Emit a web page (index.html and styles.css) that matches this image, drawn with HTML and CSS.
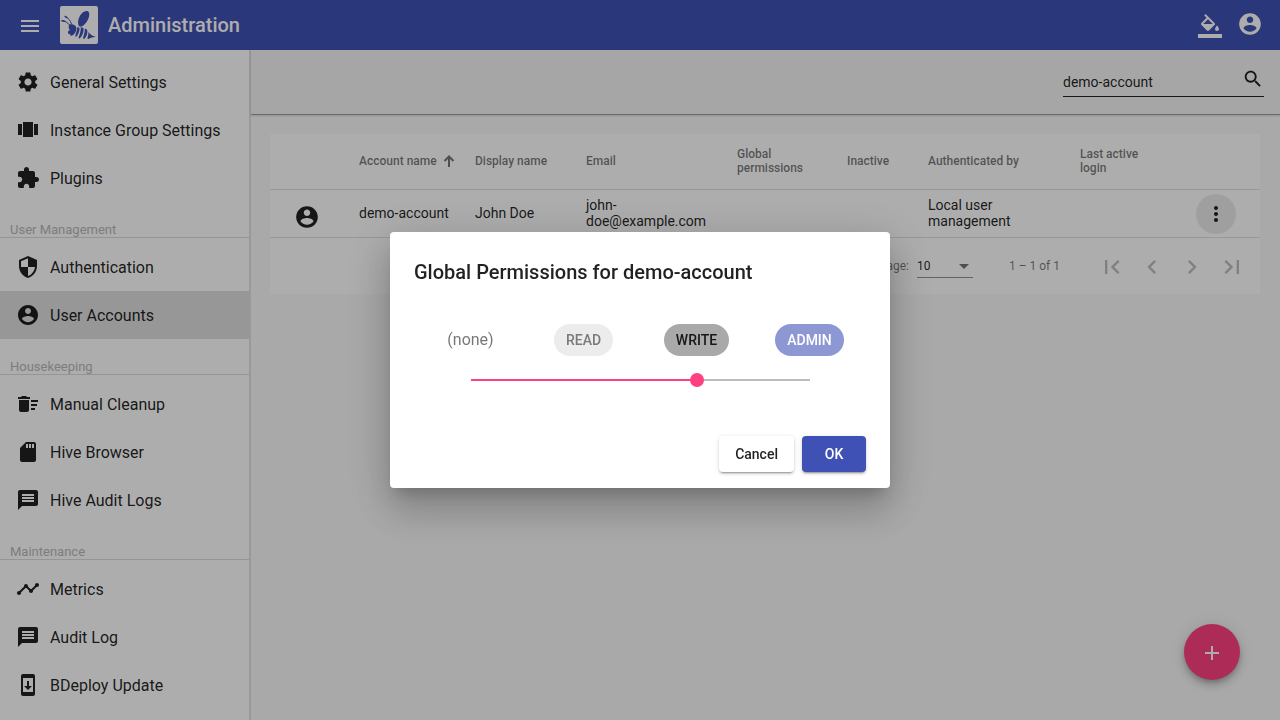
FILE: index.html
```html
<!DOCTYPE html>
<html lang="en">
<head>
<meta charset="utf-8">
<title>Administration</title>
<meta name="viewport" content="width=device-width, initial-scale=1">
<link rel="stylesheet" href="styles.css">
</head>
<body>
<svg class="sprite" aria-hidden="true">
  <symbol id="account" viewBox="0 0 24 24"><path d="M12 2C6.48 2 2 6.48 2 12s4.480 10 10 10 10-4.480 10-10S17.520 2 12 2zm0 3c1.660 0 3 1.340 3 3s-1.340 3-3 3-3-1.340-3-3 1.340-3 3-3zm0 14.200c-2.500 0-4.710-1.280-6-3.220.03-1.990 4-3.080 6-3.080 1.990 0 5.970 1.090 6 3.080-1.290 1.940-3.500 3.220-6 3.220z"/></symbol>
  <symbol id="message" viewBox="0 0 24 24"><path d="M20 2H4c-1.100 0-1.990.9-1.990 2L2 22l4-4h14c1.100 0 2-.9 2-2V4c0-1.100-.9-2-2-2zm-2 12H6v-2h12v2zm0-3H6V9h12v2zm0-3H6V6h12v2z"/></symbol>
</svg>

<div class="app">
  <header class="topbar">
    <button class="icon-btn menu-btn" aria-label="Menu"><svg class="icon" viewBox="0 0 24 24"><path d="M3 18h18v-2H3v2zm0-5h18v-2H3v2zm0-7v2h18V6H3z"/></svg></button>
    <svg class="logo" viewBox="0 0 38 38" role="img" aria-label="BDeploy">
      <rect width="38" height="38" rx="2" fill="#fff"/>
      <g fill="#3f51b5">
        <path d="M19.500 20.500C17 18 18 11.500 21.500 7.700c2.500-2.700 6.300-3.700 7.400-1.300 1.100 2.400-.4 7-2.700 10.200-1.900 2.600-4.800 4.900-6.700 3.900z"/>
        <path d="M9.500 18.600c2.500-1.200 6.200 0 6.800 3 .6 3.400-1.600 7.300-4.700 8.200-1.100.3-1.600-.6-1.200-1.500-1.800.4-2.900-1.200-2.300-2.800.4-1 1.400-1.300 2.200-1.200-1.600-.8-2.200-4.300-.8-5.700z"/>
        <path d="M17.300 21.300c1.700-.3 2.400.6 2.200 2.200-.4 3-1.500 5.300-3 6.900-.7.700-1.500.1-1.200-.8.800-2.600 1.900-5.200 2-8.300z"/>
        <path d="M20.800 21.300c2-.2 3 .9 2.800 2.700-.3 3.200-1.600 6.200-3.500 8.100-.8.700-1.800.1-1.400-1 1-2.800 2.300-5.900 2.100-9.800z"/>
        <path d="M24.800 22.500c1.800.3 2.700 1.500 2.600 3.200-.2 2.700-1.200 5.100-2.800 6.900-.8.700-1.700.2-1.500-.8.600-2.800 1.900-5.500 1.700-9.300z"/>
        <path d="M28.500 25.800c1.300 2.400 3.300 4 7.200 5-2.600.6-4.900.8-6.900 1.900-.9.500-1.600 0-1.300-.9.600-2 1.200-3.900 1-6z"/>
      </g>
      <path d="M9.500 19C7.500 16.200 5 15 2 14.700M11.500 18C10.500 14.500 8.500 12 5.200 10.500" fill="none" stroke="#3f51b5" stroke-width="1" stroke-linecap="round"/>
      <path d="M4.500 15.200 2 14.700M7 11.700 5.200 10.500" fill="none" stroke="#3f51b5" stroke-width="1.500" stroke-linecap="round"/>
    </svg>
    <h1 class="topbar-title">Administration</h1>
    <button class="icon-btn" aria-label="Theme"><svg class="icon" viewBox="0 0 24 24"><path d="M16.560 8.940L7.620 0 6.210 1.410l2.380 2.380-5.150 5.150c-.59.59-.59 1.540 0 2.120l5.500 5.500c.29.29.68.44 1.060.44s.77-.15 1.060-.44l5.500-5.500c.59-.58.59-1.530 0-2.120zM5.210 10L10 5.210 14.790 10H5.210zM19 11.500s-2 2.170-2 3.500c0 1.100.9 2 2 2s2-.9 2-2c0-1.330-2-3.500-2-3.500z"/><path d="M0 20h24v4H0z"/></svg></button>
    <button class="icon-btn user-btn" aria-label="User"><svg class="icon icon-26"><use href="#account"/></svg></button>
  </header>

  <nav class="sidebar" aria-label="Administration">
    <a class="nav-item" href="#"><svg class="icon" viewBox="0 0 24 24"><path d="M19.140 12.940c.04-.3.060-.61.060-.94 0-.32-.02-.64-.07-.94l2.030-1.580c.18-.14.230-.41.120-.61l-1.920-3.320c-.12-.22-.37-.29-.59-.22l-2.390.96c-.5-.38-1.030-.7-1.620-.94l-.36-2.540c-.04-.24-.24-.41-.48-.41h-3.840c-.24 0-.43.170-.47.410l-.36 2.540c-.59.240-1.130.570-1.620.940l-2.390-.96c-.22-.08-.47 0-.59.220L2.740 8.870c-.12.210-.08.470.12.610l2.030 1.580c-.05.3-.09.630-.09.940s.02.640.070.940l-2.030 1.580c-.18.140-.23.410-.12.610l1.920 3.320c.12.220.37.290.59.220l2.390-.96c.5.380 1.030.7 1.620.94l.36 2.540c.05.240.24.410.48.410h3.840c.24 0 .44-.17.470-.41l.36-2.540c.59-.24 1.130-.56 1.620-.94l2.390.96c.22.080.47 0 .59-.22l1.920-3.320c.12-.22.070-.47-.12-.61l-2.010-1.580zM12 15.600c-1.980 0-3.600-1.620-3.600-3.600s1.620-3.600 3.600-3.600 3.600 1.620 3.600 3.600-1.620 3.600-3.600 3.600z"/></svg>General Settings</a>
    <a class="nav-item" href="#"><svg class="icon" viewBox="0 0 24 24"><path d="M7 19h10V4H7v15zm-5-2h4V6H2v11zM18 6v11h4V6h-4z"/></svg>Instance Group Settings</a>
    <a class="nav-item" href="#"><svg class="icon" viewBox="0 0 24 24"><path d="M20.500 11H19V7c0-1.100-.9-2-2-2h-4V3.500C13 2.120 11.880 1 10.500 1S8 2.120 8 3.500V5H4c-1.100 0-1.990.9-1.990 2v3.800H3.500c1.490 0 2.700 1.210 2.700 2.700s-1.210 2.700-2.700 2.700H2V20c0 1.100.9 2 2 2h3.800v-1.500c0-1.490 1.210-2.700 2.700-2.700 1.490 0 2.700 1.210 2.700 2.700V22H17c1.100 0 2-.9 2-2v-4h1.500c1.380 0 2.500-1.120 2.500-2.500S21.880 11 20.500 11z"/></svg>Plugins</a>
    <h2 class="nav-heading">User Management</h2>
    <a class="nav-item" href="#"><svg class="icon" viewBox="0 0 24 24"><path d="M12 1L3 5v6c0 5.550 3.840 10.740 9 12 5.160-1.260 9-6.450 9-12V5l-9-4zm0 10.990h7c-.53 4.120-3.280 7.790-7 8.940V12H5V6.300l7-3.110v8.800z"/></svg>Authentication</a>
    <a class="nav-item selected" href="#" aria-current="page"><svg class="icon"><use href="#account"/></svg>User Accounts</a>
    <h2 class="nav-heading">Housekeeping</h2>
    <a class="nav-item" href="#"><svg class="icon" viewBox="0 0 24 24"><path d="M15 16h4v2h-4zm0-8h7v2h-7zm0 4h6v2h-6zM3 18c0 1.100.9 2 2 2h6c1.100 0 2-.9 2-2V8H3v10zM14 5h-3l-1-1H6L5 5H2v2h12z"/></svg>Manual Cleanup</a>
    <a class="nav-item" href="#"><svg class="icon" viewBox="0 0 24 24"><path d="M18 2h-8L4.020 8 4 20c0 1.100.9 2 2 2h12c1.100 0 2-.9 2-2V4c0-1.100-.9-2-2-2zm-6 6h-2V4h2v4zm3 0h-2V4h2v4zm3 0h-2V4h2v4z"/></svg>Hive Browser</a>
    <a class="nav-item" href="#"><svg class="icon"><use href="#message"/></svg>Hive Audit Logs</a>
    <h2 class="nav-heading">Maintenance</h2>
    <a class="nav-item" href="#"><svg class="icon" viewBox="0 0 24 24"><path d="M23 8c0 1.100-.9 2-2 2-.18 0-.35-.02-.51-.07l-3.560 3.550c.05.160.070.340.070.520 0 1.100-.9 2-2 2s-2-.9-2-2c0-.18.020-.36.070-.52l-2.550-2.550c-.16.050-.34.070-.52.070s-.36-.02-.52-.07l-4.550 4.560c.05.160.070.330.070.510 0 1.100-.9 2-2 2s-2-.9-2-2 .9-2 2-2c.18 0 .35.020.51.070l4.560-4.550C8.020 9.360 8 9.180 8 9c0-1.100.9-2 2-2s2 .9 2 2c0 .18-.02.36-.07.52l2.550 2.550c.16-.05.34-.07.52-.07s.36.020.52.070l3.550-3.560C19.020 8.350 19 8.180 19 8c0-1.100.9-2 2-2s2 .9 2 2z"/></svg>Metrics</a>
    <a class="nav-item" href="#"><svg class="icon"><use href="#message"/></svg>Audit Log</a>
    <a class="nav-item" href="#"><svg class="icon" viewBox="0 0 24 24"><path d="M17 1.010L7 1c-1.100 0-2 .9-2 2v18c0 1.100.9 2 2 2h10c1.100 0 2-.9 2-2V3c0-1.100-.9-1.990-2-1.990zM17 19H7V5h10v14zm-1-6h-3V8h-2v5H8l4 4 4-4z"/></svg>BDeploy Update</a>
  </nav>

  <main class="main">
    <div class="toolbar">
      <label class="search"><input type="text" value="demo-account" aria-label="Search"><svg class="icon icon-22" viewBox="0 0 24 24"><path d="M15.500 14h-.79l-.28-.27C15.410 12.590 16 11.110 16 9.500 16 5.910 13.090 3 9.500 3S3 5.910 3 9.500 5.910 16 9.500 16c1.610 0 3.090-.59 4.230-1.570l.27.280v.79l5 4.990L20.490 19l-4.990-5zm-6 0C7.010 14 5 11.990 5 9.500S7.010 5 9.500 5 14 7.010 14 9.500 11.990 14 9.500 14z"/></svg></label>
    </div>
    <section class="card">
      <table class="accounts">
        <colgroup><col class="c-icon"><col class="c-name"><col class="c-display"><col class="c-email"><col class="c-perm"><col class="c-inactive"><col class="c-auth"><col class="c-login"><col class="c-menu"></colgroup>
        <thead>
          <tr><th></th><th><span class="sorted">Account name <svg class="arrow" viewBox="0 0 12 12"><path d="M6 12V1.500M1.500 6 6 1.500 10.500 6" fill="none" stroke="currentColor" stroke-width="2"/></svg></span></th><th>Display name</th><th>Email</th><th>Global permissions</th><th>Inactive</th><th>Authenticated by</th><th>Last active login</th><th></th></tr>
        </thead>
        <tbody>
          <tr><td><svg class="icon icon-26 row-icon"><use href="#account"/></svg></td><td class="account-name">demo-account</td><td>John Doe</td><td>john-doe@example.com</td><td></td><td></td><td>Local user management</td><td></td><td><button class="icon-btn more-btn" aria-label="Account actions"><svg class="icon" viewBox="0 0 24 24"><path d="M12 8c1.100 0 2-.9 2-2s-.9-2-2-2-2 .9-2 2 .9 2 2 2zm0 2c-1.100 0-2 .9-2 2s.9 2 2 2 2-.9 2-2-.9-2-2-2zm0 6c-1.100 0-2 .9-2 2s.9 2 2 2 2-.9 2-2-.9-2-2-2z"/></svg></button></td></tr>
        </tbody>
      </table>
      <footer class="paginator">
        <label for="page-size">Items per page:</label>
        <span class="select-wrap"><select id="page-size"><option>10</option><option>25</option><option>50</option></select></span>
        <span class="range">1 – 1 of 1</span>
        <div class="pager">
          <button class="icon-btn" disabled aria-label="First page"><svg class="icon icon-28" viewBox="0 0 24 24"><path d="M18.410 16.590L13.820 12l4.590-4.590L17 6l-6 6 6 6zM6 6h2v12H6z"/></svg></button>
          <button class="icon-btn" disabled aria-label="Previous page"><svg class="icon icon-28" viewBox="0 0 24 24"><path d="M15.410 7.410L14 6l-6 6 6 6 1.410-1.410L10.830 12z"/></svg></button>
          <button class="icon-btn" disabled aria-label="Next page"><svg class="icon icon-28" viewBox="0 0 24 24"><path d="M10 6L8.590 7.410 13.170 12l-4.580 4.590L10 18l6-6z"/></svg></button>
          <button class="icon-btn" disabled aria-label="Last page"><svg class="icon icon-28" viewBox="0 0 24 24"><path d="M5.590 7.410L10.180 12l-4.590 4.590L7 18l6-6-6-6zM16 6h2v12h-2z"/></svg></button>
        </div>
      </footer>
    </section>
  </main>
</div>

<button class="fab" aria-label="Add account"><svg class="icon" viewBox="0 0 24 24"><path d="M19 13h-6v6h-2v-6H5v-2h6V5h2v6h6v2z"/></svg></button>

<div class="backdrop">
  <form class="dialog" role="dialog" aria-modal="true" aria-labelledby="dialog-title">
    <h2 class="dialog-title" id="dialog-title">Global Permissions for demo-account</h2>
    <div class="levels">
      <span class="none">(none)</span>
      <span class="chip chip-read">READ</span>
      <span class="chip chip-write">WRITE</span>
      <span class="chip chip-admin">ADMIN</span>
    </div>
    <div class="slider-row"><input class="slider" type="range" min="0" max="3" value="2" aria-label="Permission level"></div>
    <div class="actions">
      <button class="btn" type="button">Cancel</button>
      <button class="btn btn-primary" type="button">OK</button>
    </div>
  </form>
</div>
</body>
</html>
```
FILE: styles.css
```css
* { box-sizing: border-box; }

body {
  margin: 0;
  font-family: Roboto, "Liberation Sans", sans-serif;
  font-size: 14px;
  color: rgba(0, 0, 0, .87);
  background: #fafafa;
}

button, input, select { font: inherit; color: inherit; }
h1, h2 { margin: 0; font-weight: 500; }
.sprite { display: none; }

.icon { display: block; flex: none; width: 24px; height: 24px; fill: currentColor; }
.icon-22 { width: 22px; height: 22px; }
.icon-26 { width: 26px; height: 26px; }
.icon-28 { width: 28px; height: 28px; }

.icon-btn {
  display: flex;
  align-items: center;
  justify-content: center;
  width: 40px;
  height: 40px;
  padding: 0;
  border: 0;
  border-radius: 50%;
  background: none;
}

.app {
  display: grid;
  grid-template: 50px 1fr / 250px 1fr;
  min-height: 100vh;
}

.topbar {
  grid-column: 1 / -1;
  display: flex;
  align-items: center;
  padding: 0 10px;
  color: #fff;
  background: #3f51b5;
}
.menu-btn { margin-top: 2px; }
.topbar .icon-btn { padding-top: 2px; }
.topbar .menu-btn, .topbar .user-btn { padding-top: 0; }
.user-btn { margin-bottom: 2px; }
.logo { width: 38px; height: 38px; margin: 0 10px; }
.topbar-title { flex: 1; font-size: 20px; line-height: 32px; }

.sidebar {
  padding: 8px 0;
  background: #fff;
  border-right: 1px solid #e0e0e0;
}
.nav-item {
  display: flex;
  align-items: center;
  gap: 10px;
  height: 48px;
  padding: 0 16px;
  font-size: 16px;
  color: inherit;
  text-decoration: none;
}
.nav-item.selected { background: #dfdfdf; }
.nav-heading {
  margin-bottom: 5px;
  padding: 20px 10px 0;
  border-bottom: 1px solid #dcdcdc;
  font-size: 13px;
  line-height: 15px;
  font-weight: 400;
  color: #b9b9b9;
}

.main { min-width: 0; border-left: 1px solid #e2e2e2; }
.toolbar {
  display: flex;
  justify-content: flex-end;
  align-items: flex-start;
  height: 65px;
  padding: 17px 16px 0;
  background: #f5f5f5;
  border-bottom: 1px solid #9c9c9c;
  box-shadow: 0 1px 2px rgba(0, 0, 0, .15);
}
.search {
  display: flex;
  align-items: flex-end;
  width: 201px;
  height: 30px;
  padding-bottom: 6px;
  border-bottom: 1px solid #212121;
}
.search input {
  flex: 1;
  min-width: 0;
  height: 16px;
  padding: 0;
  border: 0;
  outline: 0;
  background: none;
}

.card { margin: 19px 20px 19px 19px; background: #fff; }
.accounts { width: 100%; table-layout: fixed; border-collapse: separate; border-spacing: 0; }
.c-icon { width: 89px; }
.c-name { width: 116px; }
.c-display { width: 111px; }
.c-email { width: 151px; }
.c-perm { width: 110px; }
.c-inactive { width: 81px; }
.c-auth { width: 152px; }
.c-login { width: 100px; }
.c-menu { width: 80px; }
.accounts th, .accounts td {
  padding: 0 30px 2px 0;
  border-bottom: 1px solid #e0e0e0;
  text-align: left;
  line-height: 16px;
}
.accounts th { height: 56px; font-size: 12px; line-height: 14px; font-weight: 500; color: rgba(0, 0, 0, .54); }
.accounts td { height: 48px; }
.accounts tr > :first-child { padding: 0 0 0 24px; }
.accounts tr > :last-child { padding: 0 24px 0 16px; }
.sorted { display: flex; align-items: center; gap: 6px; white-space: nowrap; }
.account-name { white-space: nowrap; }
.arrow { flex: none; width: 12px; height: 12px; }
.row-icon { margin-top: 6px; }
.more-btn { background: rgba(0, 0, 0, .08); }

.paginator {
  display: flex;
  align-items: center;
  justify-content: flex-end;
  height: 56px;
  padding-right: 8px;
  font-size: 12px;
  color: rgba(0, 0, 0, .54);
}
.select-wrap { position: relative; width: 56px; margin: 0 36px 0 8px; }
.select-wrap::after {
  content: "";
  position: absolute;
  right: 4px;
  top: 10px;
  border: 5px solid transparent;
  border-top-color: currentColor;
  border-bottom: 0;
  pointer-events: none;
}
.select-wrap select {
  appearance: none;
  display: block;
  width: 100%;
  height: 24px;
  padding: 0;
  border: 0;
  border-bottom: 1px solid rgba(0, 0, 0, .42);
  border-radius: 0;
  background: none;
  color: rgba(0, 0, 0, .87);
}
.pager { display: flex; margin: 2px 0 0 32px; }
.pager .icon-btn { color: rgba(0, 0, 0, .26); }

.fab {
  position: fixed;
  right: 40px;
  bottom: 40px;
  display: flex;
  align-items: center;
  justify-content: center;
  width: 56px;
  height: 56px;
  padding: 2px 0 0;
  border: 0;
  border-radius: 50%;
  color: #fff;
  background: #ff4081;
  box-shadow: 0 3px 5px -1px rgba(0, 0, 0, .2), 0 6px 10px rgba(0, 0, 0, .14), 0 1px 18px rgba(0, 0, 0, .12);
}

.backdrop {
  position: fixed;
  inset: 0;
  display: flex;
  align-items: center;
  justify-content: center;
  background: rgba(0, 0, 0, .32);
}
.dialog {
  width: 500px;
  max-width: 90vw;
  padding: 24px 24px 16px;
  border-radius: 4px;
  background: #fff;
  box-shadow: 0 11px 15px -7px rgba(0, 0, 0, .2), 0 24px 38px 3px rgba(0, 0, 0, .14), 0 9px 46px 8px rgba(0, 0, 0, .12);
}
.dialog-title { font-size: 20px; line-height: 32px; }
.levels {
  display: grid;
  grid-template-columns: repeat(4, 1fr);
  align-items: center;
  justify-items: center;
  margin-top: 36px;
}
.none { padding-bottom: 2px; font-size: 16px; color: rgba(0, 0, 0, .54); }
.chip { padding: 0 12px; border-radius: 16px; line-height: 32px; font-weight: 500; }
.chip-read { background: #ececec; color: #7a7a7a; }
.chip-write { background: #a9a9a9; color: #161616; }
.chip-admin { background: #8c97d3; color: #fff; }

.slider-row { padding: 0 49px 0 50px; }
.slider {
  appearance: none;
  display: block;
  width: 100%;
  height: 48px;
  margin: 0;
  background: linear-gradient(to right, #ff4081 66%, #bdbdbd 66%) center / calc(100% - 14px) 2px no-repeat;
}
.slider::-webkit-slider-thumb {
  appearance: none;
  width: 14px;
  height: 14px;
  border-radius: 50%;
  background: #ff4081;
}

.actions { display: flex; justify-content: flex-end; gap: 8px; margin-top: 32px; }
.btn {
  min-width: 64px;
  height: 36px;
  padding: 0 16px;
  border: 0;
  border-radius: 4px;
  font-weight: 500;
  background: #fff;
  box-shadow: 0 3px 1px -2px rgba(0, 0, 0, .2), 0 2px 2px rgba(0, 0, 0, .14), 0 1px 5px rgba(0, 0, 0, .12);
}
.btn-primary { color: #fff; background: #3f51b5; }
```
